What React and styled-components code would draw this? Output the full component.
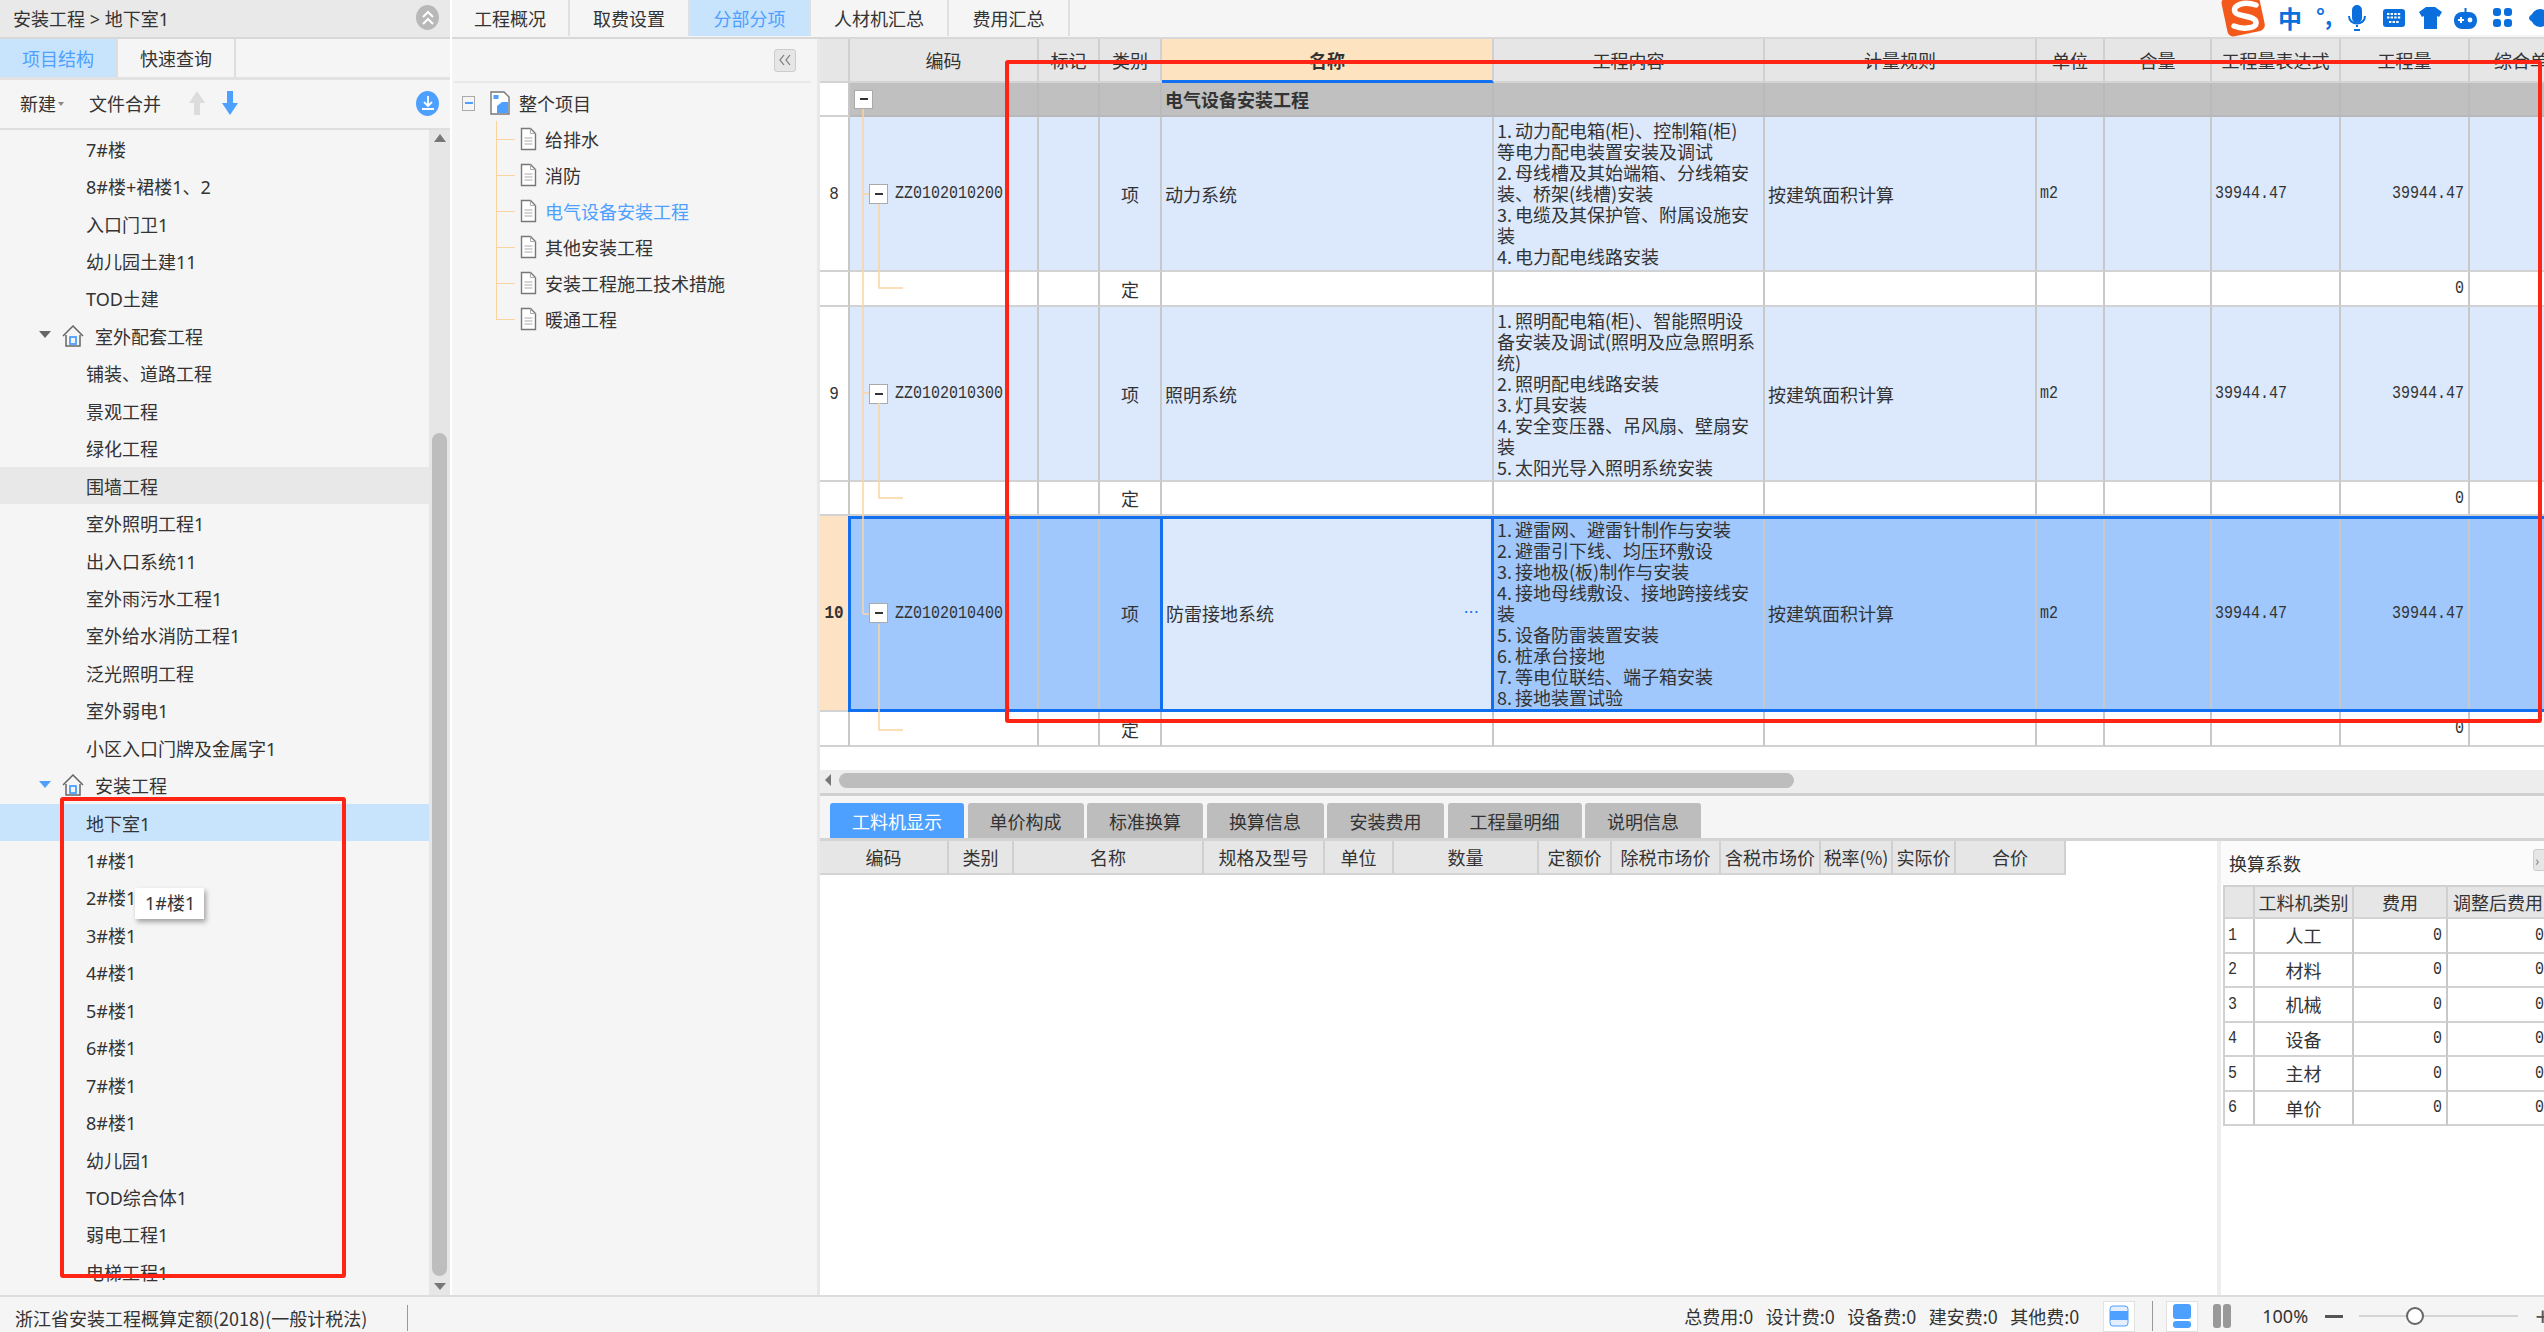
import React from 'react';
import styled, {createGlobalStyle} from 'styled-components';

const SANS = `"Noto Sans", "Noto Sans CJK SC", sans-serif`;
const CJK = `"Noto Sans CJK SC", "Liberation Sans", sans-serif`;
const MONO = `"Liberation Mono", monospace`;
const BLUE = '#4da0ff';
const LINE = '#c8c8c8';
const MAIN_COLS = '30px 189px 61px 62px 332px 271px 272px 68px 107px 129px 129px 122px';
const SUB_COLS = '129px 65px 190px 121px 69px 145px 73px 109px 100px 72px 63px 110px';
const FACTOR_COLS = '30px 99px 94px 102px';

const Global = createGlobalStyle`
  html, body {
    margin: 0;
    padding: 0;
    background: #f5f5f5;
  }
  * {
    box-sizing: border-box;
  }
`;

const Page = styled.div`
  color: #333;
  display: flex;
  flex-direction: column;
  font-family: ${SANS};
  font-size: 18px;
  height: 1332px;
  overflow: hidden;
  position: relative;
  width: 2544px;
`;

const Body = styled.div`
  display: flex;
  flex: 1;
  min-height: 0;
`;

const Sidebar = styled.aside`
  background: #f5f5f5;
  display: flex;
  flex-direction: column;
  flex: none;
  width: 450px;
`;

const Crumb = styled.div`
  align-items: center;
  background: #e9e9e9;
  border-bottom: 2px solid #d8d8d8;
  display: flex;
  height: 39px;
  justify-content: space-between;
  padding: 0 11px 2px 13px;
`;

const RoundButton = styled.span`
  align-items: center;
  background: ${p => p.$bg};
  border-radius: 50%;
  display: flex;
  height: 25px;
  justify-content: center;
  width: 23px;
`;

const SideTabs = styled.div`
  border-bottom: 3px solid #e2e2e2;
  display: flex;
  height: 41px;
`;

const SideTab = styled.div`
  align-items: center;
  background: ${p => (p.$active ? '#c8e4fd' : '#f5f5f5')};
  border-right: 2px solid #dedede;
  color: ${p => (p.$active ? BLUE : '#333')};
  display: flex;
  justify-content: center;
  width: 118px;
`;

const SideTools = styled.div`
  align-items: center;
  border-bottom: 2px solid #dedede;
  display: flex;
  height: 50px;
  padding: 0 11px 2px 20px;
`;

const ToolLabel = styled.span`
  margin-right: ${p => p.$gap}px;
`;

const ToolArrow = styled.svg`
  margin-left: ${p => p.$left}px;
`;

const Caret = styled.span`
  border-left: 3px solid transparent;
  border-right: 3px solid transparent;
  border-top: 4px solid #888;
  margin: 2px 25px 0 2px;
`;

const Spacer = styled.span`
  flex: 1;
`;

const TreeWrap = styled.div`
  display: flex;
  flex: 1;
  min-height: 0;
`;

const TreeList = styled.div`
  flex: 1;
  overflow: hidden;
`;

const TreeRow = styled.div`
  align-items: center;
  background: ${p => (p.$selected ? '#c8e4fd' : p.$hover ? '#e8e8e8' : 'transparent')};
  display: flex;
  height: 37.45px;
  padding-left: ${p => (p.$group ? 39 : 86)}px;
  white-space: nowrap;
`;

const TreeArrow = styled.span`
  border-left: 6px solid transparent;
  border-right: 6px solid transparent;
  border-top: 7px solid ${p => p.$color};
  margin: -2px 11px 0 0;
`;

const TreeHouse = styled.svg`
  margin-right: 11px;
`;

const ScrollTrack = styled.div`
  align-items: center;
  background: #e6e6e6;
  display: flex;
  flex-direction: column;
  flex: none;
  padding-top: 4px;
  position: relative;
  width: 21px;
`;

const ScrollThumb = styled.div`
  background: #bdbdbd;
  border-radius: 8px;
  height: 843px;
  margin-top: ${p => p.$top}px;
  width: 15px;
`;

const ArrowUp = styled.span`
  border-bottom: 8px solid #777;
  border-left: 6px solid transparent;
  border-right: 6px solid transparent;
`;

const ArrowDown = styled.span`
  border-left: 6px solid transparent;
  border-right: 6px solid transparent;
  border-top: 7px solid #777;
  margin-top: 7px;
`;

const Tooltip = styled.div`
  background: #fff;
  box-shadow: 2px 3px 5px rgba(0, 0, 0, 0.35);
  left: 135px;
  line-height: 31px;
  padding-left: 10px;
  position: absolute;
  top: 888px;
  width: 69px;
`;

const Workspace = styled.div`
  border-left: 2px solid #fff;
  display: flex;
  flex: 1;
  flex-direction: column;
  min-width: 0;
`;

const TopTabs = styled.div`
  background: #f5f5f5;
  border-bottom: 2px solid #d8d8d8;
  display: flex;
  flex: none;
  height: 39px;
  padding-bottom: 1px;
`;

const TopTab = styled.div`
  align-items: center;
  background: ${p => (p.$active ? '#c8e4fd' : 'transparent')};
  border-right: 2px solid #e0e0e0;
  color: ${p => (p.$active ? BLUE : '#333')};
  display: flex;
  justify-content: center;
  width: ${p => p.$w}px;
`;

const Split = styled.div`
  display: flex;
  flex: 1;
  min-height: 0;
`;

const Outline = styled.div`
  background: #f5f5f5;
  border-right: 3px solid #e8e8e8;
  flex: none;
  width: 368px;
`;

const OutlineHead = styled.div`
  align-items: center;
  border-bottom: 2px solid #e8e8e8;
  display: flex;
  height: 44px;
  justify-content: flex-end;
  margin: 0 6px 0 2px;
  padding: 0 15px 0 0;
`;

const CollapseButton = styled.span`
  align-items: center;
  background: #e6e6e6;
  border: 1px solid #ccc;
  border-radius: 3px;
  display: flex;
  height: 23px;
  justify-content: center;
  width: 22px;
`;

const OutlineRoot = styled.div`
  align-items: center;
  display: flex;
  font-family: ${CJK};
  height: 36px;
  margin-top: 2px;
  padding-left: 10px;
`;

const RootIcon = styled.svg`
  flex: none;
  margin: 0 9px 0 15px;
`;

const MinusBox = styled.span`
  align-items: center;
  background: ${p => (p.$plain ? '#fff' : '#f5f5f5')};
  border: 1px solid #aaa;
  display: flex;
  flex: none;
  height: ${p => p.$h}px;
  justify-content: center;
  width: ${p => p.$w}px;
  &::after {
    background: ${p => (p.$plain ? '#333' : BLUE)};
    content: '';
    height: 2px;
    width: 8px;
  }
`;

const OutlineChildren = styled.div`
  border-left: 1px solid #fbd3a0;
  height: 199px;
  margin-left: 44px;
`;

const OutlineRow = styled.div`
  align-items: center;
  color: ${p => (p.$active ? BLUE : '#333')};
  display: flex;
  font-family: ${CJK};
  height: 36px;
  &::before {
    background: #fbd3a0;
    content: '';
    height: 1px;
    margin-right: 5px;
    width: 18px;
  }
`;

const DocIcon = styled.svg`
  flex: none;
  margin-right: 8px;
`;

const Board = styled.div`
  display: flex;
  flex-direction: column;
  flex: 1;
  min-width: 0;
`;

const GridPane = styled.div`
  background: #fff;
  flex: none;
  height: 731px;
  overflow: hidden;
  position: relative;
`;

const GridRow = styled.div`
  display: grid;
  grid-template-columns: ${MAIN_COLS};
  height: ${p => p.$h}px;
  position: relative;
  &::after {
    border: 3px solid #1070f0;
    bottom: 0;
    content: ${p => (p.$selected ? "''" : 'none')};
    left: 28px;
    pointer-events: none;
    position: absolute;
    right: -3px;
    top: 0;
  }
`;

const HeadCell = styled.div`
  align-items: center;
  background: ${p => (p.$active ? '#fde3c0' : '#e6e6e6')};
  border-bottom: ${p => (p.$active ? '3px solid #1070f0' : '2px solid #d4d4d4')};
  border-right: 2px solid #d0d0d0;
  display: flex;
  font-family: ${CJK};
  font-weight: ${p => (p.$active ? 700 : 400)};
  justify-content: center;
  overflow: hidden;
  white-space: nowrap;
`;

const tones = {
  plain: '#fff',
  item: '#dce9fd',
  group: '#c0c0c0',
  picked: '#a0c8fc',
  mark: '#fde3c4'
};

const Cell = styled.div`
  align-items: center;
  background: ${p => tones[p.$tone]};
  border-bottom: 2px solid ${p => (p.$tone === 'group' ? '#b8b8b8' : '#d2d2d2')};
  border-right: 2px solid ${p => (p.$tone === 'group' ? '#bababa' : LINE)};
  display: flex;
  font-family: ${CJK};
  justify-content: ${p => p.$justify || 'flex-start'};
  min-width: 0;
  overflow: hidden;
  padding: 0 ${p => (p.$justify === 'flex-end' ? 4 : 3)}px;
  position: relative;
  white-space: nowrap;
`;

const NameCell = styled(Cell)`
  border-left: ${p => (p.$edge ? '3px solid #1070f0' : 'none')};
  border-right: ${p => (p.$edge ? '3px solid #1070f0' : `2px solid ${LINE}`)};
  justify-content: space-between;
  margin-left: ${p => (p.$edge ? '-2px' : '0')};
`;

const Dots = styled.span`
  color: #1070f0;
  font-family: ${MONO};
  font-size: 12px;
  font-weight: 700;
  letter-spacing: -2px;
  margin-right: 10px;
`;

const ContentLines = styled.div`
  font-size: 18px;
  line-height: 21px;
`;

const ContentLine = styled.div`
  height: 21px;
`;

const LineLead = styled.span`
  display: inline-block;
  width: 18px;
`;

const Num = styled.span`
  display: inline-block;
  font-family: ${MONO};
  font-size: 15px;
  transform: scaleY(1.2);
`;

const RowNo = styled.span`
  display: inline-block;
  font-family: ${MONO};
  font-size: 16px;
  font-weight: ${p => (p.$bold ? 700 : 400)};
  transform: scaleY(1.15);
`;

const CodeWrap = styled.div`
  align-items: center;
  display: flex;
  gap: 7px;
  padding-left: ${p => p.$left}px;
`;

const Connectors = styled.svg`
  left: 0;
  pointer-events: none;
  position: absolute;
  top: 0;
`;

const HScroll = styled.div`
  align-items: center;
  background: #ededed;
  border-bottom: 3px solid #d0d0d0;
  display: flex;
  flex: none;
  height: 26px;
  padding: 0 0 3px 5px;
`;

const LeftTri = styled.span`
  border-bottom: 6px solid transparent;
  border-right: 6px solid #777;
  border-top: 6px solid transparent;
  margin-right: 8px;
`;

const HThumb = styled.div`
  background: #bdbdbd;
  border-radius: 8px;
  height: 15px;
  width: 955px;
`;

const BottomTabs = styled.div`
  align-items: flex-end;
  background: #f5f5f5;
  border-bottom: 3px solid #d4d4d4;
  display: flex;
  flex: none;
  gap: 3.5px;
  height: 45px;
  padding-left: 10px;
`;

const BottomTab = styled.div`
  align-items: center;
  background: ${p => (p.$active ? BLUE : '#bdbdbd')};
  border-radius: 3px 3px 0 0;
  color: ${p => (p.$active ? '#fff' : '#333')};
  display: flex;
  font-family: ${CJK};
  height: 35px;
  justify-content: center;
  width: ${p => p.$w}px;
`;

const Lower = styled.div`
  background: #fff;
  display: flex;
  flex: 1;
  min-height: 0;
`;

const Ledger = styled.div`
  flex: none;
  width: 1397px;
`;

const LedgerHead = styled.div`
  display: grid;
  grid-template-columns: ${SUB_COLS};
  height: 34px;
  width: 1246px;
`;

const FactorPanel = styled.div`
  background: #fff;
  border-left: 4px solid #eee;
  flex: 1;
  min-width: 0;
  overflow: hidden;
`;

const FactorTitle = styled.div`
  align-items: center;
  background: #fbfbfb;
  display: flex;
  font-family: ${CJK};
  height: 44px;
  justify-content: space-between;
  padding-left: 8px;
`;

const ExpandTab = styled.span`
  background: #e6e6e6;
  border: 1px solid #ccc;
  border-radius: 3px;
  color: #777;
  font-size: 14px;
  height: 22px;
  line-height: 20px;
  margin-right: -2px;
  margin-top: -6px;
  padding-left: 1px;
  width: 13px;
`;

const FactorGrid = styled.div`
  border-left: 2px solid #d0d0d0;
  display: grid;
  grid-template-columns: ${FACTOR_COLS};
  margin-left: 2px;
`;

const FactorHead = styled(HeadCell)`
  border-top: 2px solid #d0d0d0;
  height: 34px;
`;

const FactorCell = styled(Cell)`
  height: 34.5px;
`;

const StatusBar = styled.footer`
  align-items: center;
  background: #f5f5f5;
  border-top: 2px solid #dcdcdc;
  display: flex;
  flex: none;
  height: 37px;
  padding: 3px 0 0 15px;
`;

const Standard = styled.span`
  border-right: 1px solid #999;
  font-family: ${CJK};
  line-height: 26px;
  margin-top: 4px;
  padding-right: 40px;
`;

const StatusFigures = styled.div`
  display: flex;
  font-family: ${CJK};
  gap: 12.5px;
  margin-left: auto;
`;

const ViewButton = styled.span`
  align-items: center;
  background: ${p => (p.$bare ? 'transparent' : '#fff')};
  border: 1px solid ${p => (p.$bare ? 'transparent' : '#e2e2e2')};
  display: flex;
  height: 31px;
  justify-content: center;
  margin-left: ${p => p.$left}px;
  width: 32px;
`;

const StatusDivider = styled.span`
  background: #999;
  height: 30px;
  margin-left: 17px;
  width: 1px;
`;

const Zoom = styled.span`
  margin-left: 24px;
`;

const ZoomMinus = styled.span`
  background: #555;
  height: 3px;
  margin-left: 17px;
  width: 18px;
`;

const SliderTrack = styled.div`
  background: #d4d4d4;
  height: 2px;
  margin-left: 16px;
  position: relative;
  width: 159px;
`;

const SliderKnob = styled.span`
  background: #fff;
  border: 2px solid #666;
  border-radius: 50%;
  height: 18px;
  left: 47px;
  position: absolute;
  top: -8px;
  width: 18px;
`;

const ZoomPlus = styled.span`
  color: #555;
  font-size: 26px;
  line-height: 1;
  margin: 0 -6px 0 17px;
`;

const Ime = styled.div`
  align-items: center;
  background: #fff;
  color: #0a6fdc;
  display: flex;
  font-family: ${CJK};
  height: 35px;
  left: 2250px;
  padding-left: 28px;
  position: absolute;
  top: 0;
  width: 294px;
`;

const ImeGlyph = styled.span`
  font-size: 24px;
  font-weight: 700;
  margin-right: ${p => p.$gap}px;
`;

const ImePunct = styled.span`
  font-size: 22px;
  font-weight: 700;
  line-height: 1;
  margin: -6px 16px 0 0;
  width: 20px;
`;

const ImeIcon = styled.svg`
  flex: none;
  margin-right: ${p => p.$gap}px;
`;

const ImeLogo = styled.svg`
  left: 2220px;
  position: absolute;
  top: -2px;
`;

const Annotation = styled.div`
  border: 4px solid #ff2414;
  border-radius: 3px;
  height: ${p => p.$h}px;
  left: ${p => p.$x}px;
  pointer-events: none;
  position: absolute;
  top: ${p => p.$y}px;
  width: ${p => p.$w}px;
`;

const Doc = () => (
  <DocIcon width="17" height="24" viewBox="0 0 17 24">
    <path d="M1.5 1.5h9l5 5v16h-14z" fill="#fff" stroke="#777" strokeWidth="1.4" />
    <path d="M10.5 1.5v5h5M4.5 11h8M4.5 14h8M4.5 17h8" fill="none" stroke="#aaa" />
  </DocIcon>
);

const House = () => (
  <TreeHouse width="22" height="22" viewBox="0 0 22 22">
    <path d="M1 11 11 1l10 10" fill="none" stroke="#666" strokeWidth="1.5" />
    <path d="M4 10v11h14V10" fill="none" stroke="#666" strokeWidth="1.5" />
    <rect x="8" y="12" width="6" height="7" fill="none" stroke={BLUE} strokeWidth="1.8" />
  </TreeHouse>
);

const StackIcon = () => (
  <svg width="20" height="26" viewBox="0 0 20 26">
    <rect x="1" y="1" width="18" height="15" rx="3" fill={BLUE} />
    <rect x="1" y="18" width="18" height="7" rx="3" fill={BLUE} />
  </svg>
);

const treeRows = [
  {t: '7#楼'},
  {t: '8#楼+裙楼1、2'},
  {t: '入口门卫1'},
  {t: '幼儿园土建11'},
  {t: 'TOD土建'},
  {t: '室外配套工程', group: '#666'},
  {t: '铺装、道路工程'},
  {t: '景观工程'},
  {t: '绿化工程'},
  {t: '围墙工程', hover: true},
  {t: '室外照明工程1'},
  {t: '出入口系统11'},
  {t: '室外雨污水工程1'},
  {t: '室外给水消防工程1'},
  {t: '泛光照明工程'},
  {t: '室外弱电1'},
  {t: '小区入口门牌及金属字1'},
  {t: '安装工程', group: BLUE},
  {t: '地下室1', selected: true},
  {t: '1#楼1'},
  {t: '2#楼1'},
  {t: '3#楼1'},
  {t: '4#楼1'},
  {t: '5#楼1'},
  {t: '6#楼1'},
  {t: '7#楼1'},
  {t: '8#楼1'},
  {t: '幼儿园1'},
  {t: 'TOD综合体1'},
  {t: '弱电工程1'},
  {t: '电梯工程1'}
];

const topTabs = [
  ['工程概况', 118],
  ['取费设置', 120],
  ['分部分项', 121, true],
  ['人材机汇总', 138],
  ['费用汇总', 121]
];

const outline = ['给排水', '消防', '电气设备安装工程', '其他安装工程', '安装工程施工技术措施', '暖通工程'];
const mainHead = ['', '编码', '标记', '类别', '名称', '工程内容', '计量规则', '单位', '含量', '工程量表达式', '工程量', '综合单价'];

const items = [
  {
    no: '8',
    code: 'ZZ0102010200',
    name: '动力系统',
    h: 155,
    subH: 35,
    lines: [
      '1.动力配电箱(柜)、控制箱(柜)',
      '等电力配电装置安装及调试',
      '2.母线槽及其始端箱、分线箱安',
      '装、桥架(线槽)安装',
      '3.电缆及其保护管、附属设施安',
      '装',
      '4.电力配电线路安装'
    ]
  },
  {
    no: '9',
    code: 'ZZ0102010300',
    name: '照明系统',
    h: 175,
    subH: 34,
    lines: [
      '1.照明配电箱(柜)、智能照明设',
      '备安装及调试(照明及应急照明系',
      '统)',
      '2.照明配电线路安装',
      '3.灯具安装',
      '4.安全变压器、吊风扇、壁扇安',
      '装',
      '5.太阳光导入照明系统安装'
    ]
  },
  {
    no: '10',
    code: 'ZZ0102010400',
    name: '防雷接地系统',
    h: 196,
    subH: 35,
    selected: true,
    lines: [
      '1.避雷网、避雷针制作与安装',
      '2.避雷引下线、均压环敷设',
      '3.接地极(板)制作与安装',
      '4.接地母线敷设、接地跨接线安',
      '装',
      '5.设备防雷装置安装',
      '6.桩承台接地',
      '7.等电位联结、端子箱安装',
      '8.接地装置试验'
    ]
  }
];

const bottomTabs = [
  ['工料机显示', 134, true],
  ['单价构成', 116],
  ['标准换算', 116],
  ['换算信息', 117],
  ['安装费用', 117],
  ['工程量明细', 134],
  ['说明信息', 116]
];

const ledgerHead = ['编码', '类别', '名称', '规格及型号', '单位', '数量', '定额价', '除税市场价', '含税市场价', '税率(%)', '实际价', '合价'];
const factors = ['人工', '材料', '机械', '设备', '主材', '单价'];
const figures = ['总费用:0', '设计费:0', '设备费:0', '建安费:0', '其他费:0'];

// the numbered lines start with a half-width "1." that takes one full character
const Content = ({text}) => {
  const numbered = /^\d\./.test(text);
  return (
    <ContentLine>
      {numbered && <LineLead>{text.slice(0, 2)}</LineLead>}
      {numbered ? text.slice(2) : text}
    </ContentLine>
  );
};

const ItemRow = ({item}) => {
  const tone = item.selected ? 'picked' : 'item';
  return (
    <GridRow $h={item.h} $selected={item.selected}>
      <Cell $tone={item.selected ? 'mark' : 'plain'} $justify="center">
        <RowNo $bold={item.selected}>{item.no}</RowNo>
      </Cell>
      <Cell $tone={tone}>
        <CodeWrap $left={16}>
          <MinusBox $plain $w={19} $h={20} />
          <Num>{item.code}</Num>
        </CodeWrap>
      </Cell>
      <Cell $tone={tone} />
      <Cell $tone={tone} $justify="center">项</Cell>
      <NameCell $tone="item" $edge={item.selected}>
        {item.name}
        {item.selected && <Dots>···</Dots>}
      </NameCell>
      <Cell $tone={tone}>
        <ContentLines>
          {item.lines.map(line => <Content key={line} text={line} />)}
        </ContentLines>
      </Cell>
      <Cell $tone={tone}>按建筑面积计算</Cell>
      <Cell $tone={tone}><Num>m2</Num></Cell>
      <Cell $tone={tone} />
      <Cell $tone={tone}><Num>39944.47</Num></Cell>
      <Cell $tone={tone} $justify="flex-end"><Num>39944.47</Num></Cell>
      <Cell $tone={tone} />
    </GridRow>
  );
};

const SubRow = ({h}) => (
  <GridRow $h={h}>
    {mainHead.map((head, i) => (
      <Cell key={i} $tone="plain" $justify={i === 3 ? 'center' : i === 10 ? 'flex-end' : undefined}>
        {i === 3 && '定'}
        {i === 10 && <Num>0</Num>}
      </Cell>
    ))}
  </GridRow>
);

export default function App() {
  return (
    <Page>
      <Global />
      <Body>
        <Sidebar>
          <Crumb>
            <span>安装工程 &gt; 地下室1</span>
            <RoundButton $bg="#b8b8b8">
              <svg width="12" height="16" viewBox="0 0 12 16" fill="none" stroke="#fff" strokeWidth="2">
                <path d="M1 7l5-5 5 5M1 14l5-5 5 5" />
              </svg>
            </RoundButton>
          </Crumb>
          <SideTabs>
            <SideTab $active>项目结构</SideTab>
            <SideTab>快速查询</SideTab>
          </SideTabs>
          <SideTools>
            <span>新建</span>
            <Caret />
            <ToolLabel $gap={28}>文件合并</ToolLabel>
            <ToolArrow $left={0} width="16" height="24" viewBox="0 0 16 24">
              <path d="M8 0 16 12h-5v12H5V12H0z" fill="#dcdcdc" />
            </ToolArrow>
            <ToolArrow $left={17} width="16" height="24" viewBox="0 0 16 24">
              <path d="M8 24 0 12h5V0h6v12h5z" fill={BLUE} />
            </ToolArrow>
            <Spacer />
            <RoundButton $bg={BLUE}>
              <svg width="14" height="16" viewBox="0 0 14 16" fill="none" stroke="#fff" strokeWidth="1.8">
                <path d="M7 1v9M3 7l4 4 4-4M1 14h12" />
              </svg>
            </RoundButton>
          </SideTools>
          <TreeWrap>
            <TreeList>
              {treeRows.map((row, i) => (
                <TreeRow key={i} $group={row.group} $selected={row.selected} $hover={row.hover}>
                  {row.group && <TreeArrow $color={row.group} />}
                  {row.group && <House />}
                  {row.t}
                </TreeRow>
              ))}
            </TreeList>
            <ScrollTrack>
              <ArrowUp />
              <ScrollThumb $top={291} />
              <ArrowDown />
            </ScrollTrack>
          </TreeWrap>
        </Sidebar>

        <Workspace>
          <TopTabs>
            {topTabs.map(([label, w, active]) => (
              <TopTab key={label} $w={w} $active={active}>{label}</TopTab>
            ))}
          </TopTabs>
          <Split>
            <Outline>
              <OutlineHead>
                <CollapseButton>
                  <svg width="12" height="12" viewBox="0 0 12 12" fill="none" stroke="#777" strokeWidth="1.2">
                    <path d="M5 1 1 6l4 5M11 1 7 6l4 5" />
                  </svg>
                </CollapseButton>
              </OutlineHead>
              <OutlineRoot>
                <MinusBox $w={13} $h={15} />
                <RootIcon width="20" height="24" viewBox="0 0 20 24">
                  <path d="M1 1h13l5 5v17H1z" fill="#fff" stroke="#777" strokeWidth="1.4" />
                  <rect x="3.5" y="4" width="5" height="4" fill={BLUE} />
                  <path d="M7 22v-7l5-4h6v11z" fill={BLUE} />
                </RootIcon>
                整个项目
              </OutlineRoot>
              <OutlineChildren>
                {outline.map(name => (
                  <OutlineRow key={name} $active={name === '电气设备安装工程'}>
                    <Doc />
                    {name}
                  </OutlineRow>
                ))}
              </OutlineChildren>
            </Outline>

            <Board>
              <GridPane>
                <GridRow $h={44}>
                  {mainHead.map((head, i) => (
                    <HeadCell key={i} $active={head === '名称'}>{head}</HeadCell>
                  ))}
                </GridRow>
                <GridRow $h={34}>
                  {mainHead.map((head, i) => (
                    <Cell key={i} $tone={i === 0 ? 'plain' : 'group'}>
                      {i === 1 && (
                        <CodeWrap $left={1}>
                          <MinusBox $plain $w={19} $h={19} />
                        </CodeWrap>
                      )}
                      {i === 4 && <strong>电气设备安装工程</strong>}
                    </Cell>
                  ))}
                </GridRow>
                {items.map(item => (
                  <React.Fragment key={item.no}>
                    <ItemRow item={item} />
                    <SubRow h={item.subH} />
                  </React.Fragment>
                ))}
                <Connectors width="100" height="731" viewBox="820 39 100 731" fill="none" stroke="#fbd3a0" strokeWidth="1.5">
                  <path d="M863 109V614M863 194h6M863 393h6M863 614h6" />
                  <path d="M879 204V288h24M879 403V498h24M879 624V730h24" />
                </Connectors>
              </GridPane>
              <HScroll>
                <LeftTri />
                <HThumb />
              </HScroll>
              <BottomTabs>
                {bottomTabs.map(([label, w, active]) => (
                  <BottomTab key={label} $w={w} $active={active}>{label}</BottomTab>
                ))}
              </BottomTabs>
              <Lower>
                <Ledger>
                  <LedgerHead>
                    {ledgerHead.map(head => <HeadCell key={head}>{head}</HeadCell>)}
                  </LedgerHead>
                </Ledger>
                <FactorPanel>
                  <FactorTitle>
                    换算系数
                    <ExpandTab>›</ExpandTab>
                  </FactorTitle>
                  <FactorGrid>
                    {['', '工料机类别', '费用', '调整后费用'].map(head => <FactorHead key={head}>{head}</FactorHead>)}
                    {factors.map((name, i) => (
                      <React.Fragment key={name}>
                        <FactorCell $tone="plain"><Num>{i + 1}</Num></FactorCell>
                        <FactorCell $tone="plain" $justify="center">{name}</FactorCell>
                        <FactorCell $tone="plain" $justify="flex-end"><Num>0</Num></FactorCell>
                        <FactorCell $tone="plain" $justify="flex-end"><Num>0</Num></FactorCell>
                      </React.Fragment>
                    ))}
                  </FactorGrid>
                </FactorPanel>
              </Lower>
            </Board>
          </Split>
        </Workspace>
      </Body>
      <StatusBar>
        <Standard>浙江省安装工程概算定额(2018)(一般计税法)</Standard>
        <StatusFigures>
          {figures.map(text => <span key={text}>{text}</span>)}
        </StatusFigures>
        <ViewButton $left={24}>
          <svg width="20" height="22" viewBox="0 0 20 22">
            <rect x="1" y="1" width="18" height="20" rx="3" fill="#e4eefc" stroke={BLUE} />
            <rect x="1" y="6" width="18" height="9" fill={BLUE} />
          </svg>
        </ViewButton>
        <StatusDivider />
        <ViewButton $left={13}><StackIcon /></ViewButton>
        <ViewButton $left={8} $bare>
          <svg width="20" height="26" viewBox="0 0 20 26">
            <rect x="1" y="1" width="8" height="24" rx="3" fill="#999" />
            <rect x="11" y="1" width="8" height="24" rx="3" fill="#999" />
          </svg>
        </ViewButton>
        <Zoom>100%</Zoom>
        <ZoomMinus />
        <SliderTrack><SliderKnob /></SliderTrack>
        <ZoomPlus>+</ZoomPlus>
      </StatusBar>

      <Tooltip>1#楼1</Tooltip>

      <Ime>
        <ImeGlyph $gap={14}>中</ImeGlyph>
        <ImePunct>°,</ImePunct>
        <ImeIcon $gap={17} width="18" height="26" viewBox="0 0 18 26" fill="none" stroke="#0a6fdc" strokeWidth="2">
          <rect x="5" y="1" width="8" height="16" rx="4" fill="#0a6fdc" />
          <path d="M1 11c0 10 16 10 16 0M9 20v2M6 25h6" />
        </ImeIcon>
        <ImeIcon $gap={14} width="22" height="18" viewBox="0 0 22 18">
          <rect width="22" height="18" rx="3" fill="#0a6fdc" />
          <path d="M4 5h14M4 8.5h14M6 13h10" stroke="#fff" strokeWidth="2" strokeDasharray="2.4 1.2" />
        </ImeIcon>
        <ImeIcon $gap={12} width="23" height="22" viewBox="0 0 23 22">
          <path d="M7 0h9l7 5-3 5-2-1v13H5V9l-2 1-3-5z" fill="#0a6fdc" />
        </ImeIcon>
        <ImeIcon $gap={16} width="23" height="22" viewBox="0 0 23 22">
          <rect y="5" width="23" height="17" rx="8" fill="#0a6fdc" />
          <path d="M11.5 5V1" stroke="#0a6fdc" strokeWidth="2" />
          <path d="M4 13h6M7 10v6" stroke="#fff" strokeWidth="2" />
          <circle cx="16" cy="13" r="2.4" fill="#fff" />
        </ImeIcon>
        <ImeIcon $gap={17} width="19" height="19" viewBox="0 0 19 19" fill="#0a6fdc">
          <rect width="8" height="8" rx="3" />
          <rect x="11" width="8" height="8" rx="3" />
          <rect y="11" width="8" height="8" rx="3" />
          <rect x="11" y="11" width="8" height="8" rx="3" />
        </ImeIcon>
        <ImeIcon $gap={0} width="20" height="24" viewBox="0 0 20 24" fill="none" stroke="#0a6fdc" strokeWidth="2">
          <circle cx="11" cy="12" r="8" fill="#0a6fdc" />
          <ellipse cx="11" cy="12" rx="10" ry="4" />
        </ImeIcon>
      </Ime>
      <ImeLogo width="50" height="42" viewBox="0 0 50 42">
        <rect x="5" y="-4" width="38" height="40" rx="6" fill="#f4591c" transform="rotate(-12 24 20)" />
        <path d="M36 7C24 3 12 7 15 14c2 5 20 3 21 10 1 6-12 8-22 4" fill="none" stroke="#fff" strokeWidth="5.5" strokeLinecap="round" />
      </ImeLogo>

      <Annotation $x={1005} $y={60} $w={1537} $h={663} />
      <Annotation $x={60} $y={797} $w={286} $h={481} />
    </Page>
  );
}
